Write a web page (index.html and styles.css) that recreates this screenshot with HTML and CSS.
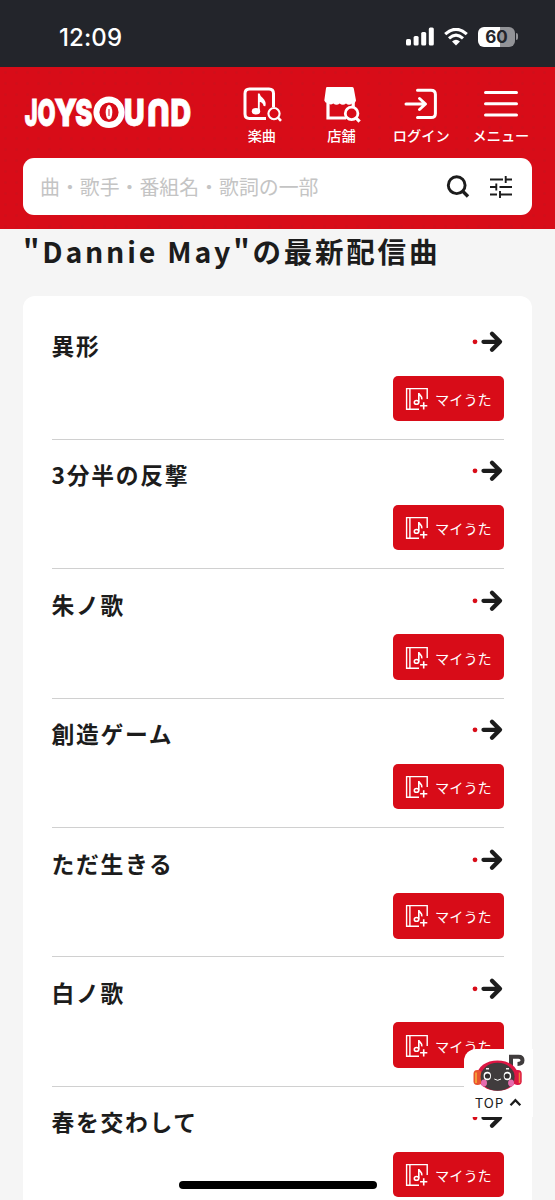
FILE: index.html
```html
<!DOCTYPE html>
<html lang="ja">
<head>
<meta charset="utf-8">
<title>JOYSOUND</title>
<link rel="stylesheet" href="styles.css">
</head>
<body>
<svg class="defs" width="0" height="0">
  <symbol id="arrow" viewBox="0 0 32 24">
    <circle cx="3" cy="12.8" r="2.4" fill="#d80c18"/>
    <path d="M11.5 12.8H27M20 4.8L28 12.8L20 20.8" fill="none" stroke="#1c1c1c" stroke-width="4.3" stroke-linecap="round" stroke-linejoin="round"/>
  </symbol>
  <symbol id="book" viewBox="0 0 24 24">
    <path d="M22.2 12V1.6H1.6V22.2H14M4.9 1.6V22.2" fill="none" stroke="#fff" stroke-width="1.4"/>
    <ellipse cx="11.5" cy="15.4" rx="2.2" ry="1.9" fill="none" stroke="#fff" stroke-width="1.5"/>
    <path d="M13.8 15.4V6C14 8.5 17.6 8.6 16.8 12.4M18.7 15.2V22.4M15.1 18.8H22.3" fill="none" stroke="#fff" stroke-width="1.6"/>
  </symbol>
</svg>
<div class="screen">
  <div class="status">
    <span class="clock">12:09</span>
    <div class="signals">
      <svg width="28" height="19" viewBox="0 0 28 19" fill="#fff"><rect x="0" y="12" width="5" height="6.5" rx="1.5"/><rect x="7.6" y="9" width="5" height="9.5" rx="1.5"/><rect x="15.2" y="5" width="5" height="13.5" rx="1.5"/><rect x="22.8" y="0.5" width="5" height="18" rx="1.5"/></svg>
      <svg width="24" height="18" viewBox="0 0 24 18" fill="none" stroke="#fff"><path d="M1.2 6.2Q12-3.6 22.8 6.2M5 10.3Q12 4.1 19 10.3" stroke-width="3.1"/><path d="M8 13.5Q12 10 16 13.5L12 17.5Z" fill="#fff" stroke="none"/></svg>
      <div class="battery"><span class="level">60</span><i class="cap"></i></div>
    </div>
  </div>
  <header class="header">
    <div class="bar">
      <svg class="logo" width="168" height="64" viewBox="24 80 168 64" fill="#fff" aria-label="JOYSOUND">
        <g class="logo-text">
          <text transform="translate(24.8 126) scale(.58 1)">J</text>
          <text transform="translate(37.4 126) scale(.63 1)">O</text>
          <text transform="translate(54.2 126) scale(.8 1)">Y</text>
          <text transform="translate(75.3 126) scale(.7 1)">S</text>
          <text transform="translate(123.9 126) scale(.77 1)">U</text>
          <text transform="translate(169.6 99.2) rotate(180) scale(.83 1)">U</text>
          <text transform="translate(170.5 126) scale(.77 1)">D</text>
        </g>
        <ellipse cx="109" cy="112.3" rx="12.6" ry="12.8" fill="none" stroke="#fff" stroke-width="6"/>
        <ellipse cx="109" cy="112.3" rx="3.3" ry="7.2"/>
        <path d="M109 109V116" stroke="#d80c18" stroke-width="1"/>
      </svg>
      <nav class="nav">
        <a class="item"><svg width="40" height="38" viewBox="0 0 40 38" fill="none" stroke="#fff"><path d="M24 31.4H7.5Q3 31.4 3 27V6.5Q3 2 7.5 2H27Q31.5 2 31.5 6.5V20" stroke-width="3"/><ellipse cx="14" cy="24.2" rx="4.2" ry="3.3" fill="#fff" stroke="none"/><path d="M16.8 24V6.5C17.5 12 24.5 12 22.5 19Q22 14.7 17.5 13.8" fill="#fff" stroke-width="1.8"/><circle cx="32" cy="26.6" r="5.6" stroke-width="2.1"/><path d="M36 30.7L39 33.8" stroke-width="2.6"/></svg><span>楽曲</span></a>
        <a class="item"><svg width="40" height="38" viewBox="0 0 40 38"><path d="M5 0H30Q31.4 0 31.8 1.4L34 13.5Q33 17 30 16.5Q27 19 24 16.5Q20.8 19 17.7 16.5Q14.5 19 11.3 16.5Q8 18.5 6 16Q3 16 2.3 13.5L4 1.3Q4.2 0 5 0Z" fill="#fff"/><path d="M6 14V31H24M31.2 15V20" fill="none" stroke="#fff" stroke-width="3.2"/><circle cx="29.6" cy="26.4" r="6.3" fill="#d80c18" stroke="#fff" stroke-width="2.8"/><path d="M34 30.9L37.6 34.6" stroke="#fff" stroke-width="3.2"/></svg><span>店舗</span></a>
        <a class="item"><svg width="40" height="38" viewBox="0 0 40 38" fill="none" stroke="#fff" stroke-width="3" stroke-linecap="round" stroke-linejoin="round"><path d="M16.5 3.2H30Q34.4 3.2 34.4 7.5V26.5Q34.4 30.6 30 30.6H16.5M5 17H24M18.5 11.5L24.5 17L18.5 22.5"/></svg><span>ログイン</span></a>
        <a class="item"><svg width="40" height="38" viewBox="0 0 40 38" stroke="#fff" stroke-width="3" stroke-linecap="round"><path d="M4.5 5.5H35.5M4.5 16.8H35.5M4.5 28.1H35.5"/></svg><span>メニュー</span></a>
      </nav>
    </div>
    <div class="search">
      <span class="hint">曲・歌手・番組名・歌詞の一部</span>
      <svg width="24" height="24" viewBox="0 0 24 24" fill="none" stroke="#1c1c1c"><circle cx="10.7" cy="10.2" r="8.4" stroke-width="2.9"/><path d="M16.5 16L22 21.5" stroke-width="3.4"/></svg>
      <svg width="22" height="22" viewBox="0 0 22 22" fill="none" stroke="#1c1c1c" stroke-width="1.9"><path d="M0 3.5H13M15.7 3.5H22M15.7 0V7M0 11H6.5M9.5 11H22M6.3 7.5V14.5M0 18.5H7M10 18.5H22M10 15V22"/></svg>
    </div>
  </header>
  <main class="main">
    <h1 class="heading">"Dannie May"の最新配信曲</h1>
    <ul class="card">
      <li class="song"><div class="top"><span class="title">異形</span><svg class="arrow"><use href="#arrow"/></svg></div><button class="add"><svg><use href="#book"/></svg>マイうた</button></li>
      <li class="song"><div class="top"><span class="title">3分半の反撃</span><svg class="arrow"><use href="#arrow"/></svg></div><button class="add"><svg><use href="#book"/></svg>マイうた</button></li>
      <li class="song"><div class="top"><span class="title">朱ノ歌</span><svg class="arrow"><use href="#arrow"/></svg></div><button class="add"><svg><use href="#book"/></svg>マイうた</button></li>
      <li class="song"><div class="top"><span class="title">創造ゲーム</span><svg class="arrow"><use href="#arrow"/></svg></div><button class="add"><svg><use href="#book"/></svg>マイうた</button></li>
      <li class="song"><div class="top"><span class="title">ただ生きる</span><svg class="arrow"><use href="#arrow"/></svg></div><button class="add"><svg><use href="#book"/></svg>マイうた</button></li>
      <li class="song"><div class="top"><span class="title">白ノ歌</span><svg class="arrow"><use href="#arrow"/></svg></div><button class="add"><svg><use href="#book"/></svg>マイうた</button></li>
      <li class="song"><div class="top"><span class="title">春を交わして</span><svg class="arrow"><use href="#arrow"/></svg></div><button class="add"><svg><use href="#book"/></svg>マイうた</button></li>
    </ul>
  </main>
  <a class="totop">
    <svg width="52" height="39" viewBox="0 0 52 39">
      <path d="M38 18V4.7H45.5Q49.5 4.7 49.5 8.3Q49.5 12 44.5 12" fill="none" stroke="#403c3d" stroke-width="4"/>
      <ellipse cx="24.5" cy="23.6" rx="20.5" ry="15.2" fill="#dc1643"/>
      <rect x="0.5" y="18" width="8" height="15" rx="3.8" fill="#e8532e"/><rect x="40.7" y="18" width="8" height="15" rx="3.8" fill="#dc1643"/>
      <path d="M3 20.5V31" stroke="#f6a33a" stroke-width="1.8"/><path d="M46.5 20.5V31" stroke="#f08038" stroke-width="1.5"/>
      <ellipse cx="24.6" cy="24.8" rx="17" ry="14" fill="#403c3d"/>
      <ellipse cx="11" cy="31" rx="3" ry="3.4" fill="#e66bad"/><ellipse cx="38" cy="31" rx="3" ry="3.4" fill="#e66bad"/>
      <ellipse cx="14.3" cy="24" rx="3.7" ry="4.2" fill="#fff"/><ellipse cx="34.4" cy="24" rx="3.7" ry="4.2" fill="#fff"/>
      <circle cx="14.5" cy="24" r="2.6" fill="#302c2d"/><circle cx="34.2" cy="24" r="2.6" fill="#302c2d"/>
      <path d="M13 16.8H16M33 16.8H36" stroke="#eee" stroke-width="1.5"/><path d="M21.3 27Q24.6 29.6 28 27" fill="none" stroke="#fff"/>
    </svg>
    <span class="label">TOP<svg width="13" height="9" viewBox="0 0 13 9"><path d="M1.5 7.3L6.4 2.2L11.3 7.3" fill="none" stroke="#1c1c1c" stroke-width="2.3"/></svg></span>
  </a>
  <div class="home"></div>
</div>
</body>
</html>
```
FILE: styles.css
```css
* { box-sizing: border-box; }
body { margin: 0; background: #f5f5f5; color: #1c1c1c; font-family: "Noto Sans CJK JP", sans-serif; }
svg { display: block; flex: none; }
.defs { position: absolute; }
.screen { position: relative; width: 555px; height: 1200px; overflow: hidden; }

.status { display: flex; justify-content: space-between; height: 67px; padding: 0 37px 0 59px; background: #23252b; color: #fff; font-family: Inter, sans-serif; }
.clock { padding-top: 23px; font-size: 24px; font-weight: 500; line-height: 30px; letter-spacing: .1px; }
.signals { display: flex; align-items: center; gap: 10px; height: 19px; margin-top: 27px; }
.battery { display: flex; align-items: center; gap: 1px; }
.level { width: 37px; height: 20px; border-radius: 6px; background: linear-gradient(90deg, #fff 59%, #929397 59%); color: #23252b; font-size: 17px; font-weight: 700; line-height: 20px; text-align: center; }
.cap { width: 2px; height: 7px; border-radius: 0 3px 3px 0; background: #929397; }

.header { height: 162px; background: #d80c18 radial-gradient(circle, #d00f1a 1px, transparent 1.6px) 0 0 / 11px 11px; }
.bar { display: flex; height: 91px; padding: 13px 22px 0 24px; }
.logo-text { font-family: Inter, sans-serif; font-size: 37px; font-weight: 900; stroke: #fff; stroke-width: .8px; }
.nav { display: flex; margin: 7px 0 0 30px; color: #fff; }
.item { display: flex; flex: none; flex-direction: column; align-items: center; width: 79.7px; }
.item span { font-size: 14.2px; font-weight: 500; line-height: 20px; }
.search { display: flex; align-items: center; height: 57px; margin: 0 23px; padding: 0 20px 0 17px; border-radius: 11px; background: #fff; }
.hint { flex: 1; color: #c4c4c4; font-size: 19.9px; line-height: 28px; }
.search svg + svg { margin-left: 20px; }

.main { padding: 0 23px; }
.heading { height: 67px; margin: 0; font-size: 28.5px; font-weight: 700; line-height: 44px; letter-spacing: 2.8px; white-space: nowrap; }
.card { height: 1000px; margin: 0; padding: 14.5px 28.5px 0; border-radius: 12px; background: #fff; list-style: none; }
.song { height: 129.4px; padding-top: 18.5px; border-bottom: 1.5px solid #d0d0d0; }
.top { display: flex; justify-content: space-between; height: 46.5px; }
.title { font-size: 22.8px; font-weight: 700; line-height: 34px; letter-spacing: 1.7px; }
.arrow { width: 32px; height: 24px; }
.add { display: flex; align-items: center; gap: 6px; width: 111px; height: 45.5px; margin-left: auto; padding: 1px 0 0 12.5px; border: 0; border-radius: 5px; background: #d80c18; color: #fff; font: 400 14.2px/20px "Noto Sans CJK JP", sans-serif; }
.add svg { width: 24px; height: 24px; }

.totop { position: absolute; left: 464px; top: 1049px; width: 69px; height: 68px; padding: 3px 0 0 9px; border-radius: 12px 0 0 0; background: #fff; }
.label { display: flex; align-items: center; gap: 5px; padding-left: 2px; font-size: 13.5px; line-height: 23px; letter-spacing: 1px; }
.home { position: absolute; left: 179px; top: 1181px; width: 198px; height: 8px; border-radius: 4px; background: #000; }
```
